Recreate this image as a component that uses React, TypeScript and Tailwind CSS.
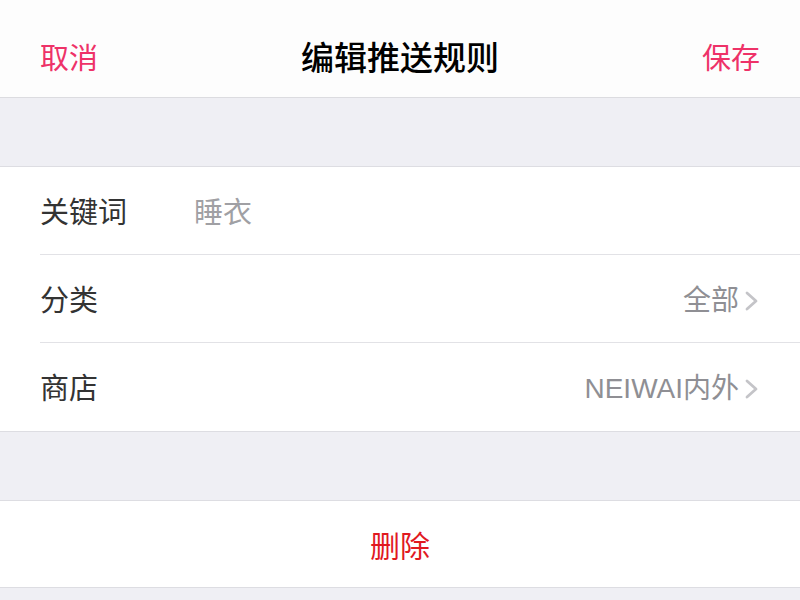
import React from 'react';

const font = { fontFamily: '"Noto Sans CJK SC", "Noto Sans", sans-serif' };
const valueFont = { fontFamily: '"Liberation Sans", "Noto Sans CJK SC", sans-serif' };

function Chevron() {
  return (
    <svg width="18" height="24" viewBox="0 0 18 24" className="ml-[3px]">
      <path d="M5 4 L14 12 L5 20" fill="none" stroke="#c4c4c8" strokeWidth="2.8" strokeLinecap="round" strokeLinejoin="round" />
    </svg>
  );
}

type Row = { label: string; value: string; chevron?: boolean };

const rows: Row[] = [
  { label: '关键词', value: '睡衣' },
  { label: '分类', value: '全部', chevron: true },
  { label: '商店', value: 'NEIWAI内外', chevron: true },
];

export default function App() {
  return (
    <div className="w-[800px] h-[600px] overflow-hidden bg-[#efeff4]" style={font}>
      <div className="h-[98px] bg-[#fdfdfd] border-b border-[#dcdce0] flex items-center justify-between px-[40px] pt-[16px]">
        <span className="text-[29px] text-[#ee3268] w-[100px]">取消</span>
        <span className="text-[33px] font-medium text-black">编辑推送规则</span>
        <span className="text-[29px] text-[#ee3268] w-[100px] text-right">保存</span>
      </div>

      <div className="h-[68px]" />

      <div className="bg-white border-t border-b border-[#dddde2]">
        {rows.map((r, i) => (
          <div key={r.label} className="pl-[40px]">
            <div className={`h-[88px] flex items-center pr-[40px] ${i < rows.length - 1 ? 'border-b border-[#e2e2e6]' : ''}`}>
              <span className="text-[29px] text-[#333333] w-[154px]">{r.label}</span>
              {r.chevron ? (
                <div className="flex-1 flex items-center justify-end translate-y-[2px]">
                  <span className="text-[28px] text-[#8f8f94]" style={valueFont}>{r.value}</span>
                  <Chevron />
                </div>
              ) : (
                <span className="text-[29px] text-[#a0a0a4]">{r.value}</span>
              )}
            </div>
          </div>
        ))}
      </div>

      <div className="h-[68px]" />

      <div className="h-[88px] bg-white border-t border-b border-[#dddde2] flex items-center justify-center">
        <span className="text-[30px] text-[#e1191f]">删除</span>
      </div>
    </div>
  );
}
